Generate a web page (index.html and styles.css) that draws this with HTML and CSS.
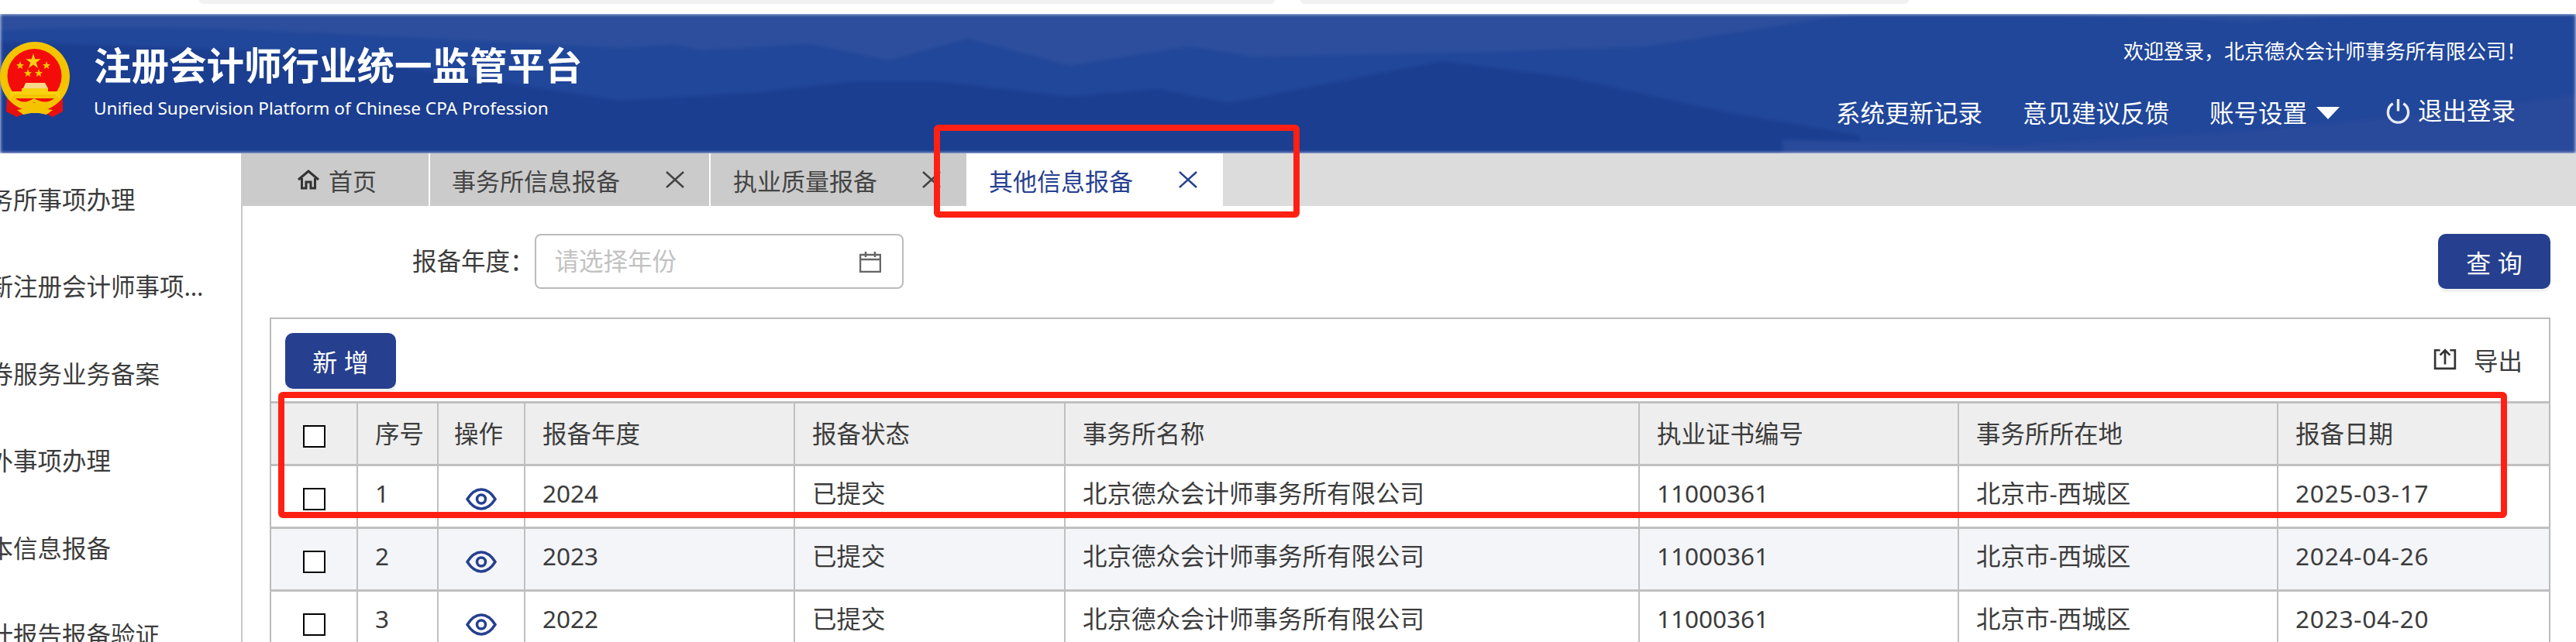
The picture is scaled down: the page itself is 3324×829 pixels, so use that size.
FILE: index.html
```html
<!DOCTYPE html>
<html lang="zh-CN">
<head>
    <meta charset="UTF-8">
    <title>注册会计师行业统一监管平台</title>
    <link rel="stylesheet" href="styles.css">
</head>
<body>
    <div class="top-strip">
        <div class="strip-bar strip-a"></div>
        <div class="strip-bar strip-b"></div>
    </div>

    <header class="header">
        <svg class="header-bg" viewBox="0 0 3324 180" preserveAspectRatio="none" aria-hidden="true">
            <rect width="3324" height="180" fill="#2c4e9c"/>
            <path d="M0 22 C200 10 400 25 520 30 L800 44 L870 40 L905 47 L1045 39 L1147 60 L1249 32 L1381 67 L1535 42 L1616 55 L1900 50 L2126 42 L2392 0 L3324 0 L3324 180 L0 180Z" fill="#21479a"/>
            <path d="M2660 0 L3060 0 L2900 10 Z" fill="#2b4e9c"/>
            <path d="M0 36 L400 50 L800 112 L973 102 L1106 87 L1208 87 L1381 107 L1494 97 L1586 115 L1861 61 L2024 82 L2228 127 L2400 157 L2400 180 L0 180Z" fill="#1b3e90"/>
            <path d="M2300 162 L2600 170 L2900 150 L3150 128 L3324 104 L3324 180 L2300 180Z" fill="#29499a"/>
        </svg>

        <div class="brand">
            <svg class="emblem" viewBox="0 0 90 98" aria-hidden="true">
                <path d="M9 72 L8 90 L22 97 L36 90 L54 90 L68 97 L81 90 L81 72Z" fill="#e8100f"/>
                <circle cx="45" cy="45" r="45" fill="#f4c400"/>
                <circle cx="44.5" cy="44" r="35" fill="#f40c0c"/>
                <path d="M43 15 L45.300 22.300 L52.700 22.300 L46.700 26.700 L49 34 L43 29.500 L37 34 L39.300 26.700 L33.300 22.300 L40.700 22.300Z" fill="#f8d210"/>
                <path d="M26 25 L27.500 29 L31 29 L28.200 31.500 L29.200 35 L26 33 L22.800 35 L23.800 31.500 L21 29 L24.500 29Z" fill="#f4c400"/>
                <path d="M60 25 L61.500 29 L65 29 L62.200 31.500 L63.200 35 L60 33 L56.800 35 L57.800 31.500 L55 29 L58.500 29Z" fill="#f4c400"/>
                <path d="M36 35 L37.500 39 L41 39 L38.200 41.500 L39.200 45 L36 43 L32.800 45 L33.800 41.500 L31 39 L34.500 39Z" fill="#f4c400"/>
                <path d="M50 35 L51.500 39 L55 39 L52.200 41.500 L53.200 45 L50 43 L46.800 45 L47.800 41.500 L45 39 L48.500 39Z" fill="#f4c400"/>
                <path d="M33 53 L58 53 L62 60 L30 60Z" fill="#f8d88a"/>
                <rect x="28" y="60" width="34" height="6" fill="#f8d210"/>
                <rect x="13" y="64" width="64" height="9" fill="#f8d210"/>
                <path d="M14 73 C24 86 36 84 44 78 C52 84 66 86 76 73 L72 68 L18 68Z" fill="#f4c400"/>
                <path d="M20 73 C28 80 36 78 44 73 C52 78 62 80 70 73Z" fill="#f40c0c"/>
                <path d="M22 88 L34 86 L44 83 L56 86 L68 88 L60 94 L50 92 L40 92 L30 94Z" fill="#f4c400"/>
            </svg>
            <div class="brand-text">
                <div class="brand-title">注册会计师行业统一监管平台</div>
                <div class="brand-sub">Unified Supervision Platform of Chinese CPA Profession</div>
            </div>
        </div>

        <div class="user-area">
            <div class="welcome">欢迎登录，北京德众会计师事务所有限公司！</div>
            <nav class="user-nav">
                <span>系统更新记录</span>
                <span>意见建议反馈</span>
                <span class="nav-account">账号设置<i class="caret"></i></span>
                <span class="nav-logout">
                    <svg class="power-icon" viewBox="0 0 34 34" aria-hidden="true">
                        <path d="M10 7 A13.500 13.500 0 1 0 24 7" fill="none" stroke="#e8ecf6" stroke-width="3.500"/>
                        <path d="M17 1 V17" fill="none" stroke="#e8ecf6" stroke-width="3.500"/>
                    </svg>
                    退出登录
                </span>
            </nav>
        </div>
    </header>

    <div class="layout">
        <aside class="sidebar">
            <div class="side-item">事务所事项办理</div>
            <div class="side-item">更新注册会计师事项业务办理</div>
            <div class="side-item">证券服务业务备案</div>
            <div class="side-item">境外事项办理</div>
            <div class="side-item">基本信息报备</div>
            <div class="side-item">审计报告报备验证</div>
        </aside>

        <main class="main">
            <div class="tabs">
                <div class="tab tab-home">
                    <svg class="home-icon" viewBox="0 0 30 26" aria-hidden="true">
                        <path d="M2 13 L15 2 L28 13 M6.500 11 V24 H12 V16 H18 V24 H23.500 V11" fill="none" stroke="#333" stroke-width="3"/>
                    </svg>
                    首页
                </div>
                <div class="tab tab-firm">事务所信息报备<svg class="close-icon" viewBox="0 0 24 22" aria-hidden="true"><path d="M1 1 L23 21 M23 1 L1 21"/></svg></div>
                <div class="tab tab-quality">执业质量报备<svg class="close-icon" viewBox="0 0 24 22" aria-hidden="true"><path d="M1 1 L23 21 M23 1 L1 21"/></svg></div>
                <div class="tab tab-active">其他信息报备<svg class="close-icon" viewBox="0 0 24 22" aria-hidden="true"><path d="M1 1 L23 21 M23 1 L1 21"/></svg></div>
            </div>

            <div class="content">
                <div class="search-row">
                    <div class="filter">
                        <label class="filter-label">报备年度：</label>
                        <div class="year-input">
                            <span class="placeholder">请选择年份</span>
                            <svg class="calendar-icon" viewBox="0 0 28 28" aria-hidden="true">
                                <path d="M1 5 H27 V27 H1Z M1 11 H27 M8 1 V8 M20 1 V8" fill="none" stroke="#666" stroke-width="2.500"/>
                            </svg>
                        </div>
                    </div>
                    <button class="btn btn-search">查 询</button>
                </div>

                <div class="table-box">
                    <div class="toolbar">
                        <button class="btn btn-add">新 增</button>
                        <div class="export">
                            <svg class="export-icon" viewBox="0 0 28 26" aria-hidden="true">
                                <path d="M8 2 H2 V24 H26 V2 H20 M14 19 V3 M8 8 L14 2 L20 8" fill="none" stroke="#333" stroke-width="2.500"/>
                            </svg>
                            导出
                        </div>
                    </div>

                    <table class="data-table">
                        <colgroup>
                            <col class="col-check"><col class="col-no"><col class="col-op"><col class="col-year"><col class="col-status"><col class="col-name"><col class="col-cert"><col class="col-place"><col class="col-date">
                        </colgroup>
                        <thead>
                            <tr>
                                <th class="cell-check"><span class="checkbox"></span></th>
                                <th>序号</th>
                                <th class="head-op">操作</th>
                                <th>报备年度</th>
                                <th>报备状态</th>
                                <th>事务所名称</th>
                                <th>执业证书编号</th>
                                <th>事务所所在地</th>
                                <th>报备日期</th>
                            </tr>
                        </thead>
                        <tbody>
                            <tr>
                                <td class="cell-check"><span class="checkbox"></span></td>
                                <td>1</td>
                                <td class="cell-op"><svg class="eye-icon" viewBox="0 0 40 29" aria-hidden="true"><path d="M2 14.500 C8 5 14 2 20 2 C26 2 32 5 38 14.500 C32 24 26 27 20 27 C14 27 8 24 2 14.500Z" fill="none" stroke="#26408f" stroke-width="3.500"/><circle cx="20" cy="14.500" r="5.500" fill="none" stroke="#26408f" stroke-width="3.500"/></svg></td>
                                <td>2024</td>
                                <td>已提交</td>
                                <td>北京德众会计师事务所有限公司</td>
                                <td>11000361</td>
                                <td>北京市-西城区</td>
                                <td class="cell-date">2025-03-17</td>
                            </tr>
                            <tr class="row-even">
                                <td class="cell-check"><span class="checkbox"></span></td>
                                <td>2</td>
                                <td class="cell-op"><svg class="eye-icon" viewBox="0 0 40 29" aria-hidden="true"><path d="M2 14.500 C8 5 14 2 20 2 C26 2 32 5 38 14.500 C32 24 26 27 20 27 C14 27 8 24 2 14.500Z" fill="none" stroke="#26408f" stroke-width="3.500"/><circle cx="20" cy="14.500" r="5.500" fill="none" stroke="#26408f" stroke-width="3.500"/></svg></td>
                                <td>2023</td>
                                <td>已提交</td>
                                <td>北京德众会计师事务所有限公司</td>
                                <td>11000361</td>
                                <td>北京市-西城区</td>
                                <td class="cell-date">2024-04-26</td>
                            </tr>
                            <tr>
                                <td class="cell-check"><span class="checkbox"></span></td>
                                <td>3</td>
                                <td class="cell-op"><svg class="eye-icon" viewBox="0 0 40 29" aria-hidden="true"><path d="M2 14.500 C8 5 14 2 20 2 C26 2 32 5 38 14.500 C32 24 26 27 20 27 C14 27 8 24 2 14.500Z" fill="none" stroke="#26408f" stroke-width="3.500"/><circle cx="20" cy="14.500" r="5.500" fill="none" stroke="#26408f" stroke-width="3.500"/></svg></td>
                                <td>2022</td>
                                <td>已提交</td>
                                <td>北京德众会计师事务所有限公司</td>
                                <td>11000361</td>
                                <td>北京市-西城区</td>
                                <td class="cell-date">2023-04-20</td>
                            </tr>
                        </tbody>
                    </table>
                </div>
            </div>
        </main>
    </div>

    <!-- red annotation boxes drawn over the screenshot -->
    <div class="mark mark-tab"></div>
    <div class="mark mark-row"></div>
</body>
</html>
```

FILE: styles.css
```css
html, body {
    height: 829px;
    overflow: hidden;
}
body {
    position: relative;
    margin: 0;
    font-family: "Noto Sans", "Noto Sans CJK SC", sans-serif;
    font-size: 31.5px;
    color: #3c3c3c;
    background-color: #fff;
}

/* top strip */
.top-strip {
    display: flex;
    height: 18px;
}
.strip-bar {
    height: 5px;
    background-color: #f1f1f1;
    border-radius: 0 0 8px 8px;
}
.strip-a {
    margin-left: 257px;
    width: 1388px;
}
.strip-b {
    margin-left: 33px;
    width: 785px;
}

/* header */
.header {
    position: relative;
    display: flex;
    justify-content: space-between;
    height: 180px;
    color: #fff;
    overflow: hidden;
}
.header-bg {
    position: absolute;
    left: 0;
    top: 0;
    width: 100%;
    height: 100%;
    filter: blur(2px);
}
.brand {
    position: relative;
    display: flex;
}
.emblem {
    width: 90px;
    height: 98px;
    margin-top: 36px;
    margin-right: 31px;
}
.brand-title {
    margin-top: 36px;
    font-size: 48.500px;
    font-weight: 700;
    line-height: 60px;
}
.brand-sub {
    margin-top: 10px;
    font-size: 22.600px;
    line-height: 32px;
}
.user-area {
    position: relative;
    display: flex;
    flex-direction: column;
    align-items: flex-end;
    padding-right: 64px;
}
.welcome {
    margin-top: 30px;
    font-size: 26px;
    line-height: 36px;
}
.user-nav {
    display: flex;
    align-items: center;
    gap: 52px;
    margin-top: 40px;
    margin-right: 14px;
    line-height: 44px;
}
.nav-account {
    display: flex;
    align-items: center;
}
.caret {
    width: 0;
    height: 0;
    margin-left: 12px;
    border-left: 15px solid transparent;
    border-right: 15px solid transparent;
    border-top: 16px solid #fff;
}
.nav-logout {
    display: flex;
    align-items: center;
    gap: 9px;
    margin-left: 7px;
    margin-top: -6px;
}
.power-icon {
    width: 33px;
    height: 33px;
}

/* page body */
.layout {
    display: flex;
    height: 631px;
}
.sidebar {
    width: 311px;
    flex-shrink: 0;
    padding-top: 4px;
    overflow: hidden;
}
.side-item {
    height: 112.400px;
    line-height: 112.400px;
    width: 263px;
    text-indent: -46px;
    white-space: nowrap;
    overflow: hidden;
    text-overflow: ellipsis;
}
.main {
    flex: 1;
    min-width: 0;
}

/* tabs */
.tabs {
    display: flex;
    height: 68px;
    font-size: 31px;
    background-color: #dcdcdc;
}
.tab {
    display: flex;
    align-items: center;
    background-color: #cbcbcb;
    color: #444;
    box-sizing: border-box;
    border-right: 2px solid #fff;
}
.tab-home {
    width: 244px;
    padding-left: 72px;
    gap: 11px;
}
.tab-firm {
    width: 362px;
    padding-left: 28px;
    gap: 59px;
}
.tab-quality {
    width: 330px;
    padding-left: 29px;
    gap: 58px;
    border-right: none;
}
.tab-active {
    width: 331px;
    padding-left: 29px;
    gap: 59px;
    background-color: #fff;
    color: #26408f;
    border-right: none;
}
.home-icon {
    width: 30px;
    height: 26px;
}
.close-icon {
    width: 24px;
    height: 22px;
    fill: none;
    stroke: currentColor;
    stroke-width: 2.500;
}

/* content */
.content {
    height: 563px;
    box-sizing: border-box;
    padding: 36px 33px 0 35px;
    border-left: 2px solid #c8c8c8;
}
.search-row {
    display: flex;
    justify-content: space-between;
    height: 71px;
}
.filter {
    display: flex;
    align-items: center;
    padding-left: 184px;
}
.filter-label {
    padding-bottom: 5px;
}
.year-input {
    display: flex;
    align-items: center;
    justify-content: space-between;
    box-sizing: border-box;
    width: 476px;
    height: 71px;
    padding: 0 27px 0 24px;
    border: 2px solid #bbb;
    border-radius: 8px;
}
.placeholder {
    padding-bottom: 5px;
    color: #c2c2c2;
}
.calendar-icon {
    width: 28px;
    height: 28px;
}
.btn {
    height: 71px;
    padding: 0;
    border: none;
    border-radius: 10px;
    background-color: #263f8e;
    color: #fff;
    font-family: inherit;
    font-size: 32px;
    box-shadow: 0 4px 0 #f1f1f1;
}
.btn-search {
    width: 145px;
}
.btn-add {
    width: 143px;
    height: 72px;
}

/* table */
.table-box {
    margin-top: 37px;
    border: 2px solid #bbb;
    border-bottom: none;
}
.toolbar {
    display: flex;
    justify-content: space-between;
    align-items: flex-start;
    height: 106px;
    box-sizing: border-box;
    padding: 18px 34px 0 18px;
}
.export {
    display: flex;
    align-items: center;
    gap: 22px;
    margin-top: 11px;
}
.export-icon {
    width: 30px;
    height: 28px;
}
.data-table {
    width: 100%;
    table-layout: fixed;
    border-collapse: collapse;
}
.col-check { width: 111px; }
.col-no { width: 104px; }
.col-op { width: 112px; }
.col-year { width: 348px; }
.col-status { width: 349px; }
.col-name { width: 741px; }
.col-cert { width: 412px; }
.col-place { width: 412px; }
.data-table th,
.data-table td {
    height: 81px;
    padding: 0 0 9px 22px;
    border: 2px solid #c0c0c0;
    border-top-width: 3px;
    font-weight: 400;
    text-align: left;
    line-height: 40px;
    box-sizing: border-box;
}
.data-table tr > :first-child {
    border-left: none;
}
.data-table tr > :last-child {
    border-right: none;
}
.data-table th {
    background-color: #eee;
    padding-bottom: 0;
}
.data-table .head-op {
    padding-left: 20px;
}
.data-table .cell-date {
    letter-spacing: 0.8px;
}
.row-even {
    background-color: #f4f5f9;
}
.data-table .cell-check {
    padding: 6px 0 0;
    text-align: center;
}
.data-table .cell-op {
    padding: 6px 0 0;
    text-align: center;
}
.checkbox {
    display: block;
    box-sizing: border-box;
    width: 29px;
    height: 29px;
    margin: 0 auto;
    border: 2.500px solid #000;
    background-color: #fff;
}
.eye-icon {
    display: block;
    width: 40px;
    height: 29px;
    margin: 0 auto;
}

/* annotations */
.mark {
    position: absolute;
    box-sizing: border-box;
    border: 8px solid #ff2013;
    border-radius: 6px;
}
.mark-tab {
    left: 1205px;
    top: 161px;
    width: 472px;
    height: 120px;
}
.mark-row {
    left: 359px;
    top: 506px;
    width: 2876px;
    height: 163px;
}
```
